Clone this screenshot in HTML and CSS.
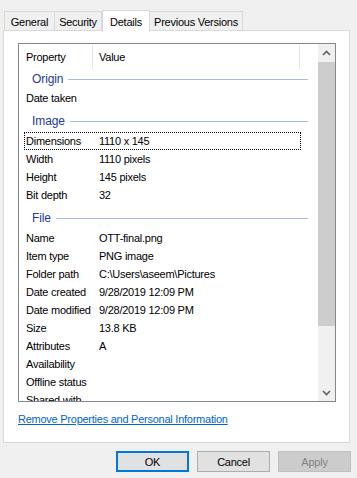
FILE: index.html
```html
<!DOCTYPE html>
<html>
<head>
<meta charset="utf-8">
<link rel="stylesheet" href="styles.css">
</head>
<body>
<div class="tabs">
  <div class="tab tab-general">General</div>
  <div class="tab tab-security">Security</div>
  <div class="tab tab-details selected">Details</div>
  <div class="tab tab-prev">Previous Versions</div>
</div>
<div class="panel">
  <div class="listbox">
    <div class="list-main">
      <div class="header">
        <div class="hcell hcell-prop">Property</div>
        <div class="hcell hcell-value">Value</div>
        <div class="hcell hcell-rest"></div>
      </div>
      <div class="group group-first"><span class="group-name">Origin</span><span class="group-line"></span></div>
      <div class="row"><span class="label">Date taken</span><span class="value"></span></div>
      <div class="group"><span class="group-name">Image</span><span class="group-line"></span></div>
      <div class="row focused"><span class="label">Dimensions</span><span class="value">1110 x 145</span></div>
      <div class="row"><span class="label">Width</span><span class="value">1110 pixels</span></div>
      <div class="row"><span class="label">Height</span><span class="value">145 pixels</span></div>
      <div class="row"><span class="label">Bit depth</span><span class="value">32</span></div>
      <div class="group"><span class="group-name">File</span><span class="group-line"></span></div>
      <div class="row"><span class="label">Name</span><span class="value">OTT-final.png</span></div>
      <div class="row"><span class="label">Item type</span><span class="value">PNG image</span></div>
      <div class="row"><span class="label">Folder path</span><span class="value">C:\Users\aseem\Pictures</span></div>
      <div class="row"><span class="label">Date created</span><span class="value">9/28/2019 12:09 PM</span></div>
      <div class="row"><span class="label">Date modified</span><span class="value">9/28/2019 12:09 PM</span></div>
      <div class="row"><span class="label">Size</span><span class="value">13.8 KB</span></div>
      <div class="row"><span class="label">Attributes</span><span class="value">A</span></div>
      <div class="row"><span class="label">Availability</span><span class="value"></span></div>
      <div class="row"><span class="label">Offline status</span><span class="value"></span></div>
      <div class="row"><span class="label">Shared with</span><span class="value"></span></div>
    </div>
    <div class="scrollbar">
      <div class="sb-btn">
        <svg width="9" height="6" viewBox="0 0 9 6"><polyline points="1,5 4.5,1.5 8,5" fill="none" stroke="#606060" stroke-width="1.6"/></svg>
      </div>
      <div class="sb-thumb"></div>
      <div class="sb-btn sb-down">
        <svg width="9" height="6" viewBox="0 0 9 6"><polyline points="1,1 4.5,4.5 8,1" fill="none" stroke="#606060" stroke-width="1.6"/></svg>
      </div>
    </div>
  </div>
  <a class="link" href="#">Remove Properties and Personal Information</a>
</div>
<div class="buttons">
  <div class="btn btn-default">OK</div>
  <div class="btn">Cancel</div>
  <div class="btn btn-disabled">Apply</div>
</div>
</body>
</html>
```

FILE: styles.css
```css
* { box-sizing: border-box; }

html, body {
  margin: 0;
  padding: 0;
}

body {
  width: 357px;
  height: 478px;
  overflow: hidden;
  background: #f0f0f0;
  font-family: "Liberation Sans", Arial, sans-serif;
  font-size: 11px;
  letter-spacing: -0.25px;
  color: #000;
}

.tabs {
  display: flex;
  align-items: flex-end;
  height: 31px;
  padding: 10px 0 0 4px;
  position: relative;
  z-index: 2;
}

.tab {
  height: 19px;
  border: 1px solid #d9d9d9;
  border-bottom: none;
  background: #f0f0f0;
  display: flex;
  align-items: center;
  justify-content: center;
  margin-right: -1px;
  margin-bottom: 1px;
  padding-top: 1px;
}

.tab-general { width: 51px; }
.tab-security { width: 48px; }
.tab-details { width: 48px; }
.tab-prev { width: 94px; }

.tab.selected {
  height: 22px;
  background: #fff;
  margin-bottom: -1px;
  margin-left: 1px;
  position: relative;
  z-index: 3;
  padding-top: 0;
}

.panel {
  margin-left: 3px;
  margin-top: -1px;
  width: 347px;
  height: 413px;
  background: #fff;
  border: 1px solid #d9d9d9;
  padding: 12px 0 0 14px;
  position: relative;
  z-index: 1;
}

.listbox {
  width: 318px;
  height: 359px;
  border: 1px solid #828790;
  display: flex;
  overflow: hidden;
}

.list-main {
  flex: 1;
  overflow: hidden;
}

.header {
  display: flex;
  height: 24px;
}

.hcell {
  display: flex;
  align-items: center;
  height: 24px;
  border-right: 1px solid #e5e5e5;
  margin-top: 1px;
}

.hcell-prop { width: 74px; padding-left: 7px; }
.hcell-value { width: 207px; padding-left: 6px; }
.hcell-rest { flex: 1; border-right: none; }

.group {
  display: flex;
  align-items: center;
  height: 25px;
  padding: 3px 10px 0 13px;
  color: #1e3a9a;
  font-size: 12px;
  letter-spacing: -0.1px;
}

.group-first {
  height: 21px;
  padding-top: 0;
}

.group-line {
  flex: 1;
  height: 1px;
  background: #a9bbe4;
  margin-left: 5px;
  margin-top: 1px;
}

.row {
  display: flex;
  align-items: center;
  margin-left: 5px;
  width: 277px;
  height: 18px;
  border: 1px dotted transparent;
  white-space: nowrap;
}

.row.focused {
  border-color: #000;
}

.label {
  width: 74px;
  padding-left: 1px;
  flex: none;
}

.value {
  flex: 1;
}

.scrollbar {
  width: 17px;
  background: #f0f0f0;
  display: flex;
  flex-direction: column;
}

.sb-btn {
  height: 18px;
  display: flex;
  align-items: center;
  justify-content: center;
  flex: none;
}

.sb-thumb {
  height: 264px;
  background: #cdcdcd;
  flex: none;
}

.sb-down {
  margin-top: auto;
  height: 17px;
}

.link {
  display: block;
  margin-top: 10px;
  width: max-content;
  line-height: 14px;
  color: #0066cc;
  text-decoration: underline;
}

.buttons {
  display: flex;
  justify-content: flex-end;
  gap: 8px;
  padding-right: 6px;
  margin-top: 8px;
}

.btn {
  width: 73px;
  height: 21px;
  background: #e1e1e1;
  border: 1px solid #adadad;
  display: flex;
  align-items: center;
  justify-content: center;
}

.btn-default {
  border: 2px solid #0078d7;
}

.btn-disabled {
  background: #cccccc;
  border-color: #bfbfbf;
  color: #838383;
}
```
